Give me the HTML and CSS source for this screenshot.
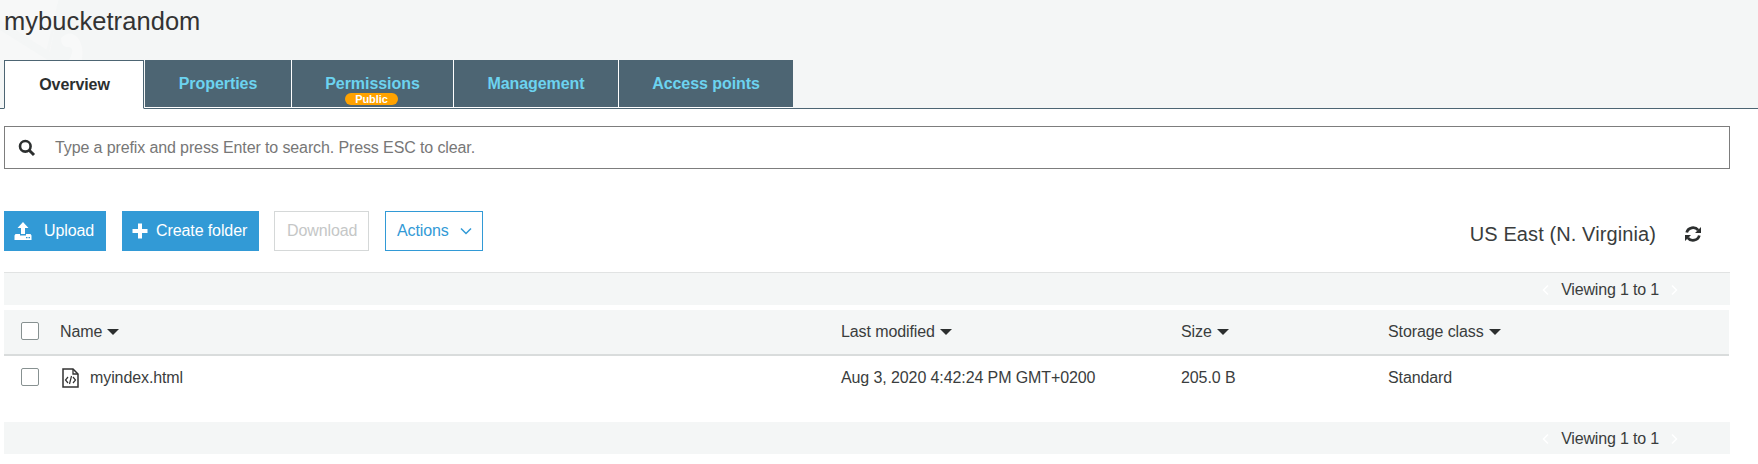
FILE: index.html
```html
<!DOCTYPE html>
<html lang="en">
<head>
<meta charset="utf-8">
<title>mybucketrandom</title>
<link rel="stylesheet" href="styles.css">
</head>
<body>
<header class="header">
  <svg class="watermark" width="90" height="60" viewBox="0 0 90 60" aria-hidden="true">
    <path d="M0 0H60L50 52L0 20Z" fill="#f7f8f8"/>
    <path d="M0 27L47 54M47 54L60 0" fill="none" stroke="#f4f6f6" stroke-width="3"/>
    <path d="M0 30L48 60H0Z" fill="#f7f8f8"/>
    <path d="M61 38Q70 29 78 38Q84 46 82 60H69Q77 46 66 47Q61 46 61 38Z" fill="#f8f9f9"/>
  </svg>
  <h1 class="title">mybucketrandom</h1>
  <nav class="tabs">
    <a class="tab tab-active">Overview</a>
    <a class="tab w-prop">Properties</a>
    <a class="tab w-perm">Permissions<span class="badge">Public</span></a>
    <a class="tab w-man">Management</a>
    <a class="tab w-acc">Access points</a>
  </nav>
</header>
<main class="main">
  <div class="search">
    <svg width="18" height="18" viewBox="0 0 18 18"><circle cx="7.300" cy="7.300" r="5.300" fill="none" stroke="#2c2f2f" stroke-width="2.600"/><path d="M11.200 11.200L16 16" stroke="#2c2f2f" stroke-width="3"/></svg>
    <span class="search-text">Type a prefix and press Enter to search. Press ESC to clear.</span>
  </div>
  <div class="toolbar">
    <button class="btn primary upload"><svg width="18" height="18" viewBox="0 0 18 18" fill="#fff"><path d="M9 0L14.500 6H11V12H7V6H3.500Z"/><path d="M1.500 12H6V13.500H12V12H16.500L17.500 13.500V18H.5V13.500Z"/><path d="M12 15h1.500v1.300H12zM14.500 15H16v1.300h-1.500z" fill="#329ad6"/></svg><span>Upload</span></button>
    <button class="btn primary create"><svg width="16" height="16" viewBox="0 0 16 16" fill="#fff"><path d="M6 .5h4V6h5.500v4H10v5.500H6V10H.5V6H6z"/></svg><span>Create folder</span></button>
    <button class="btn disabled download"><span>Download</span></button>
    <button class="btn outline actions"><span>Actions</span><svg width="12" height="8" viewBox="0 0 12 8"><path d="M1 1.500L6 6.500L11 1.500" fill="none" stroke="#329ad6" stroke-width="1.500"/></svg></button>
    <div class="region"><span>US East (N. Virginia)</span>
      <svg width="16" height="16" viewBox="0 0 16 16"><g fill="none" stroke="#2c2f2f" stroke-width="2.800"><path d="M1.700 6.500C3.200 1 10 .2 13.200 4.200"/><path d="M14.300 9.500C12.800 15 6 15.800 2.800 11.800"/></g><path d="M16 1v6h-6zM0 15V9h6z" fill="#2c2f2f"/></svg>
    </div>
  </div>
  <div class="pager pager-top"><svg width="7" height="10" viewBox="0 0 7 10"><path d="M6 .5L1.500 5L6 9.500" fill="none" stroke="#fff" stroke-width="1.500"/></svg><span>Viewing 1 to 1</span><svg width="7" height="10" viewBox="0 0 7 10"><path d="M1 .5L5.500 5L1 9.500" fill="none" stroke="#fff" stroke-width="1.500"/></svg></div>
  <div class="row head">
    <span class="check"></span>
    <span class="cell"><span>Name</span><i class="caret"></i></span>
    <span class="cell"><span>Last modified</span><i class="caret"></i></span>
    <span class="cell"><span>Size</span><i class="caret"></i></span>
    <span class="cell"><span>Storage class</span><i class="caret"></i></span>
  </div>
  <div class="row item">
    <span class="check"></span>
    <span class="cell"><svg class="file" width="17" height="20" viewBox="0 0 17 20" fill="none" stroke="#333"><path d="M1 1H11L16 6V19H1Z" stroke-width="1.500"/><path d="M11 1V6H16" stroke-width="1.300"/><path d="M6 9L3.500 12L6 15M11 9L13.500 12L11 15M9.500 8L7.500 16" stroke-width="1.200"/></svg><span>myindex.html</span></span>
    <span class="cell">Aug 3, 2020 4:42:24 PM GMT+0200</span>
    <span class="cell">205.0 B</span>
    <span class="cell">Standard</span>
  </div>
  <div class="pager"><svg width="7" height="10" viewBox="0 0 7 10"><path d="M6 .5L1.500 5L6 9.500" fill="none" stroke="#fff" stroke-width="1.500"/></svg><span>Viewing 1 to 1</span><svg width="7" height="10" viewBox="0 0 7 10"><path d="M1 .5L5.500 5L1 9.500" fill="none" stroke="#fff" stroke-width="1.500"/></svg></div>
</main>
</body>
</html>
```
FILE: styles.css
```css
* { box-sizing: border-box; }
body { margin: 0; height: 464px; overflow: hidden; background: #fff; color: #3a3d3d; font: 16px/20px "Liberation Sans", Arial, sans-serif; }
span { white-space: nowrap; }
svg { display: block; flex: none; }
.header { position: relative; height: 109px; background: #f4f6f6; border-bottom: 1px solid #4d6573; }
.watermark { position: absolute; left: 0; top: 0; }
.title { position: relative; margin: 0; height: 60px; padding: 6px 0 0 4px; font-size: 25.5px; line-height: 30px; letter-spacing: .06px; font-weight: 400; color: #333; }
.tabs { position: relative; display: flex; padding-left: 4px; height: 49px; }
.tab { position: relative; height: 48px; border-right: 1px solid #fff; border-bottom: 1px solid #fff; background: #4d6573; background-clip: padding-box; color: #6cd3f0; font-weight: 700; letter-spacing: -.06px; text-align: center; padding-top: 14px; }
.tab-active { width: 140px; height: 49px; margin-right: 1px; padding-left: 1px; background: #fff; border: 1px solid #4d6573; border-bottom-color: #fff; color: #2c2f2f; }
.w-prop { width: 147px; }
.w-perm { width: 162px; }
.w-man { width: 165px; }
.w-acc { width: 174px; border-right: 0; }
.badge { position: absolute; left: 53px; top: 33px; width: 53px; height: 12px; border-radius: 6px; background: #ffa200; color: #fff; font-size: 11px; line-height: 12px; }
.main { padding-left: 4px; width: 1730px; }
.search { display: flex; align-items: center; height: 43px; margin-top: 17px; padding-left: 13px; border: 1px solid #7d7d7d; color: #777; }
.search-text { margin-left: 19px; letter-spacing: -.115px; }
.toolbar { display: flex; margin-top: 42px; height: 61px; }
.btn { display: flex; align-items: center; height: 40px; margin: 0; padding: 0; border: 1px solid #329ad6; font: inherit; letter-spacing: -.1px; }
.primary { background: #329ad6; color: #fff; }
.upload { width: 102px; margin-right: 16px; padding-left: 9px; gap: 12px; }
.create { width: 137px; margin-right: 15px; padding-left: 9px; gap: 8px; }
.disabled { background: #fff; border-color: #d5d8d8; color: #c5c7c7; }
.download { width: 95px; margin-right: 16px; padding-left: 12px; }
.outline { background: #fff; color: #329ad6; }
.actions { width: 98px; padding-left: 11px; gap: 11px; }
.region { display: flex; align-items: center; height: 46px; margin-left: auto; padding-right: 29px; gap: 29px; font-size: 20px; letter-spacing: .1px; }
.pager { display: flex; align-items: center; justify-content: flex-end; height: 32px; padding: 2px 52px 0 0; gap: 12px; letter-spacing: -.17px; background: #f4f6f6; }
.pager-top { height: 33px; border-top: 1px solid #e1e3e3; margin-bottom: 5px; }
.row { display: grid; grid-template-columns: 39px 781px 340px 207px 1fr; align-items: center; padding-left: 17px; width: 1725px; letter-spacing: -.1px; }
.head { height: 46px; background: #f4f6f6; border-bottom: 2px solid #d9dcdc; }
.item { height: 42px; margin-bottom: 24px; }
.item .cell { padding-top: 1px; }
.head .check { margin-top: -2px; }
.check { width: 18px; height: 18px; border: 1px solid #879191; border-radius: 2px; background: #fff; }
.cell { display: flex; align-items: center; }
.caret { margin-left: 5px; border: 6px solid transparent; border-top-color: #2c2f2f; border-bottom: 0; }
.file { margin: 0 11px 0 2px; }
```
